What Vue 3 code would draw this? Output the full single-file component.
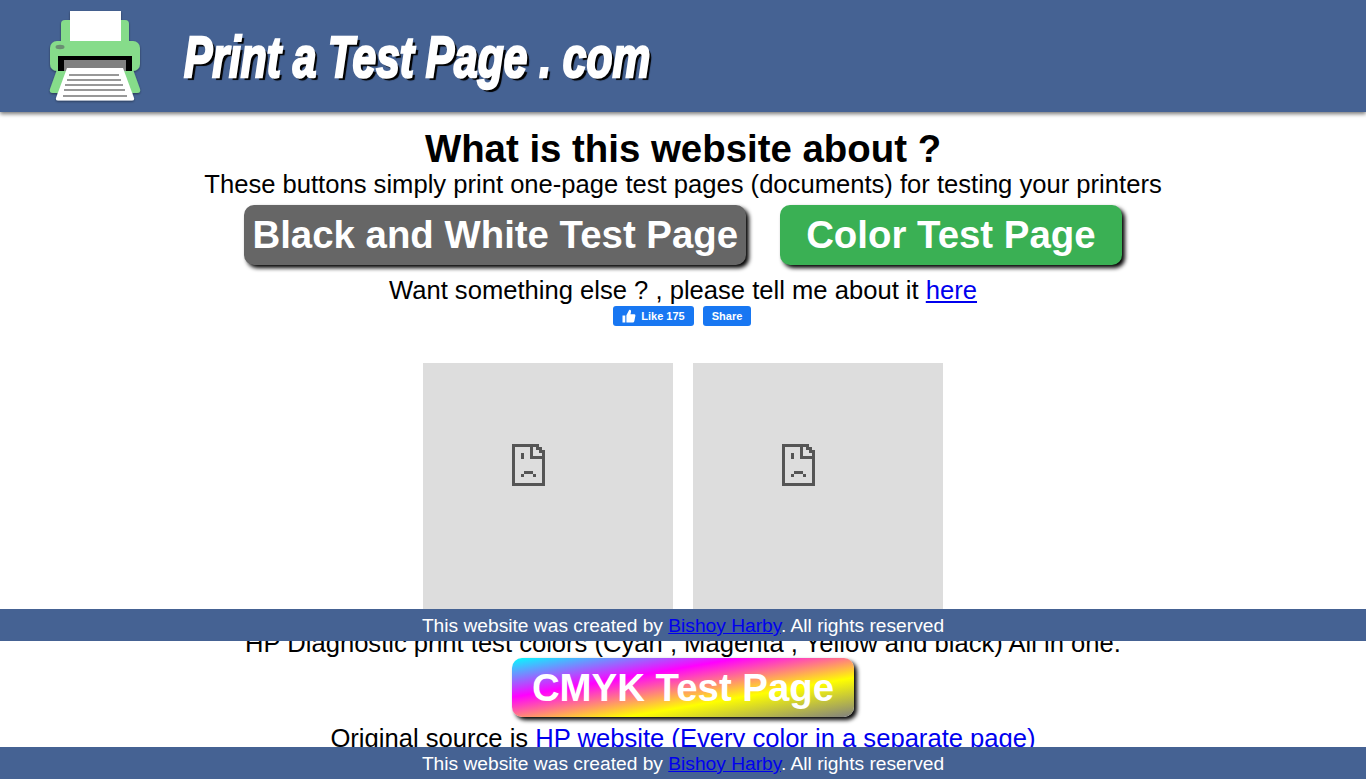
<template>
  <div class="page">
    <header class="top-bar">
      <svg class="printer" width="100" height="104" viewBox="0 0 100 104">
        <defs>
          <filter id="soft" x="-10%" y="-10%" width="120%" height="120%">
            <feDropShadow dx="0" dy="1" stdDeviation="1" flood-color="#000" flood-opacity="0.45" />
          </filter>
        </defs>
        <g filter="url(#soft)">
          <rect x="16" y="20" width="68" height="30" rx="4" fill="#86dc8a" />
          <path d="M14 64 L5 89 Q4 93 8 93 L14 93 L26 70 Z M86 64 L95 89 Q96 93 92 93 L86 93 L74 70 Z" fill="#86dc8a" />
          <rect x="25" y="11" width="51" height="32" fill="#fff" />
          <rect x="5" y="41" width="90" height="30" rx="7" fill="#86dc8a" />
          <ellipse cx="15" cy="47" rx="4.5" ry="2.2" fill="#6a8f72" />
          <rect x="13" y="56" width="74" height="15" fill="#000" />
          <rect x="19" y="60" width="62" height="11" fill="#808080" />
          <path d="M22 68 L78 68 L89 98 Q89.5 100.500 87 100.500 L13 100.500 Q10.500 100.500 11 98 Z" fill="#fff" />
          <path d="M24 75 H74 M22 80 H76 M20 85 H78 M19 90 H80 M18 96 H82" stroke="#333" stroke-width="1.2" />
        </g>
      </svg>
      <div class="logo-text">Print a Test Page . com</div>
    </header>

    <main class="content">
      <h1>What is this website about ?</h1>
      <p class="lead">These buttons simply print one-page test pages (documents) for testing your printers</p>
      <div class="btn-row">
        <a class="btn gray-btn">Black and White Test Page</a>
        <a class="btn green-btn">Color Test Page</a>
      </div>
      <p class="want">Want something else ? , please tell me about it <a href="#">here</a></p>
      <div class="fb-row">
        <span class="fb-btn like">
          <svg width="14" height="14" viewBox="0 0 14 14">
            <path d="M0.5 6.5H3.3V13.5H0.5Z M4.4 6.3 L7 1.2 Q7.2 0.5 8 0.7 Q9.5 1.2 9 3 L8.5 5.3 H12.4 Q13.7 5.4 13.4 6.8 L12.3 12.3 Q12 13.5 10.8 13.5 H4.4Z" fill="#fff" />
          </svg>
          Like 175
        </span>
        <span class="fb-btn share">Share</span>
      </div>
      <div class="ad-row">
        <div class="ad" v-for="n in 2" :key="n">
          <svg width="33" height="42" viewBox="0 0 11 14" shape-rendering="crispEdges">
            <path fill="#555" d="M0 0H9V1H10V2H11V14H0Z M1 1V13H10V5H6V1Z M7 1V4H10V3H9V2H8V1Z M3 3H4V5H3Z M4 9H7V10H8V11H7V10H4V11H3V10H4Z" fill-rule="evenodd" />
          </svg>
        </div>
      </div>
      <p class="hp-line">HP Diagnostic print test colors (Cyan , Magenta , Yellow and black) All in one.</p>
      <div class="btn-row cmyk-row">
        <a class="btn cmyk-btn">CMYK Test Page</a>
      </div>
      <p class="source">Original source is <a href="#" class="plain">HP website (Every color in a separate page)</a></p>
    </main>

    <footer class="credit mid">This website was created by <a href="#">Bishoy Harby</a>. All rights reserved</footer>
    <footer class="credit bottom">This website was created by <a href="#">Bishoy Harby</a>. All rights reserved</footer>
  </div>
</template>

<script setup>
</script>

<style>
html, body {
  margin: 0;
  overflow: hidden;
}
</style>

<style scoped>
.page {
  position: relative;
  height: 779px;
  overflow: hidden;
  background: #fff;
  color: #000;
  font-family: "Liberation Sans", Arial, sans-serif;
}

.top-bar {
  height: 112px;
  background: #456293;
  box-shadow: 0 2px 4px #777;
  display: flex;
  align-items: flex-start;
  padding-left: 45px;
  box-sizing: border-box;
}

.printer {
  flex: none;
}

.logo-text {
  margin: 24px 0 0 39px;
  font-size: 58px;
  line-height: 66px;
  font-weight: bold;
  font-style: italic;
  color: #fff;
  white-space: nowrap;
  -webkit-text-stroke: 2.6px #fff;
  text-shadow: 4px 3px 1px #000;
  transform: scaleX(0.733);
  transform-origin: left center;
}

.content {
  text-align: center;
  padding-top: 16px;
}

h1 {
  margin: 0;
  font-size: 38.4px;
  line-height: 42px;
  font-weight: bold;
}

p {
  margin: 0;
  font-size: 25.6px;
  line-height: 30px;
}

.lead {
  line-height: 28px;
  margin-bottom: 7px;
}

.btn-row {
  display: flex;
  justify-content: center;
  gap: 34px;
}

.btn {
  display: block;
  height: 60px;
  line-height: 60px;
  border-radius: 10px;
  color: #fff;
  font-size: 38.4px;
  font-weight: bold;
  box-shadow: 3px 3px 4px #000;
  white-space: nowrap;
}

.gray-btn {
  background: #666;
  padding: 0 8px;
}

.green-btn {
  background: #3ab054;
  padding: 0 26px;
}

.want {
  margin-top: 10px;
}

.fb-row {
  display: flex;
  justify-content: center;
  gap: 9px;
  margin-top: 1px;
  transform: translateX(-1px);
}

.fb-btn {
  display: flex;
  align-items: center;
  justify-content: center;
  height: 20px;
  border-radius: 3px;
  background: #1877f2;
  color: #fff;
  font-size: 11px;
  font-weight: bold;
  box-sizing: border-box;
}

.like {
  width: 81px;
  gap: 5px;
}

.share {
  width: 48px;
}

.ad-row {
  display: flex;
  justify-content: center;
  gap: 20px;
  margin-top: 37px;
}

.ad {
  width: 250px;
  height: 250px;
  box-sizing: border-box;
  padding: 81px 0 0 89px;
  background: #ddd;
  text-align: left;
}

.hp-line {
  margin-top: 15px;
}

.cmyk-btn {
  height: 59px;
  line-height: 59px;
  padding: 0 20px;
  background: linear-gradient(to bottom right, #00ffff, #ff00ff, #ffff00, #808080);
}

.source {
  margin-top: 6px;
}

.plain {
  text-decoration: none;
}

a {
  color: #0000ee;
}

.credit {
  position: absolute;
  left: 0;
  right: 0;
  height: 32px;
  line-height: 34px;
  background: #456293;
  color: #fff;
  font-size: 19.2px;
  text-align: center;
}

.mid {
  top: 609px;
}

.bottom {
  top: 747px;
}
</style>
